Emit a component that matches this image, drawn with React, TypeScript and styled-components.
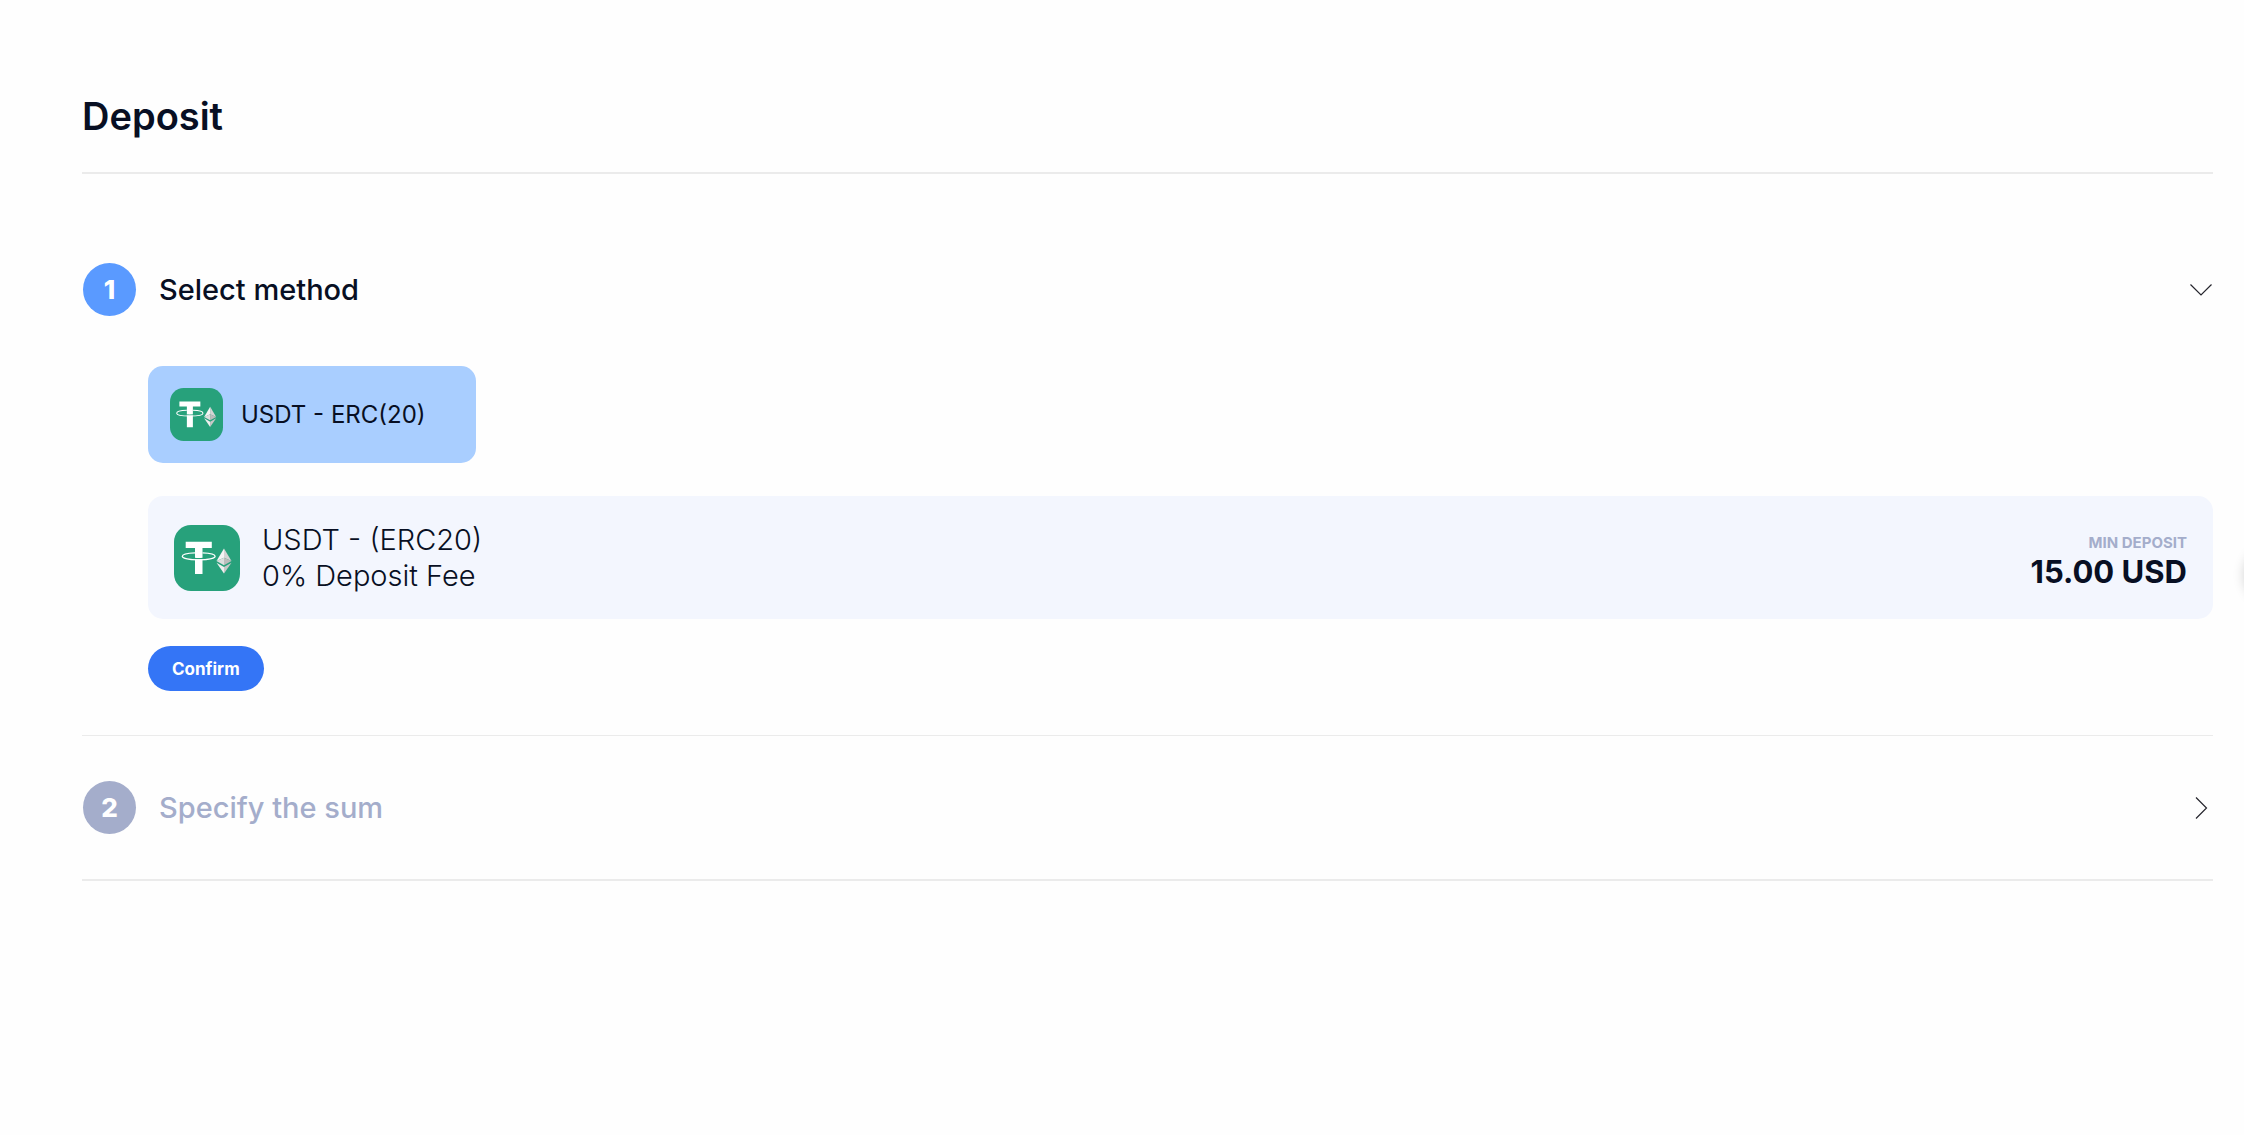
import React, { useState } from "react";
import styled, { createGlobalStyle } from "styled-components";

const color = {
  ink: "#080f23",
  muted: "#a4adcb",
  line: "#ebebeb",
  step: "#5a9aff",
  primary: "#3475f6",
  selected: "#a9ceff",
  panel: "#f3f6fe",
};

const GlobalStyle = createGlobalStyle`
  *, *::before, *::after { box-sizing: border-box; }
  body {
    margin: 0;
    background: #fefefe;
    color: ${color.ink};
    font-family: Inter, "Liberation Sans", sans-serif;
    overflow-x: hidden;
  }
  button { font: inherit; color: inherit; border: 0; cursor: pointer; }
`;

const Page = styled.main`
  padding: 92px 31px 48px 82px;
`;

const PageHeader = styled.header`
  padding-bottom: 32px;
  border-bottom: 2px solid ${color.line};
`;

const Title = styled.h1`
  margin: 0;
  font-size: 38px;
  font-weight: 600;
  line-height: 48px;
`;

const Steps = styled.div`
  padding-top: 44px;
`;

const Step = styled.section<{ $last?: boolean }>`
  border-bottom: ${(p) => (p.$last ? 2 : 1)}px solid ${color.line};
`;

const StepHeading = styled.h2`
  margin: 0;
`;

const StepToggle = styled.button<{ $muted?: boolean }>`
  display: flex;
  align-items: center;
  gap: 23px;
  width: 100%;
  padding: 45px 1px;
  background: none;
  color: ${(p) => (p.$muted ? color.muted : color.ink)};
  font-size: 29px;
  font-weight: 500;
  line-height: 36px;
  text-align: left;
`;

const StepNumber = styled.span<{ $active?: boolean }>`
  display: grid;
  place-items: center;
  flex: none;
  width: 53px;
  height: 53px;
  border-radius: 50%;
  background: ${(p) => (p.$active ? color.step : color.muted)};
  color: #fff;
  font-size: 26px;
  font-weight: 800;
`;

const StepLabel = styled.span`
  flex: 1;
`;

const StepBody = styled.div`
  display: flex;
  flex-direction: column;
  align-items: flex-start;
  padding: 5px 0 44px 66px;
`;

const Method = styled.button`
  display: flex;
  align-items: center;
  gap: 18px;
  min-width: 328px;
  padding: 22px;
  border-radius: 15px;
  background: ${color.selected};
  font-size: 24px;
  font-weight: 400;
  line-height: 30px;
`;

const Summary = styled.div`
  display: flex;
  align-items: center;
  align-self: stretch;
  gap: 22px;
  margin-top: 33px;
  padding: 26px 26px 25px;
  border-radius: 15px;
  background: ${color.panel};
`;

const SummaryText = styled.p`
  flex: 1;
  margin: 0;
  font-size: 29px;
  font-weight: 300;
  line-height: 36px;
`;

const Minimum = styled.div`
  padding-top: 8px;
  text-align: right;
`;

const MinimumLabel = styled.div`
  color: ${color.muted};
  font-size: 15px;
  font-weight: 700;
  line-height: 20px;
`;

const MinimumValue = styled.div`
  font-size: 31px;
  font-weight: 700;
  line-height: 38px;
`;

const Confirm = styled.button`
  margin-top: 27px;
  padding: 0 24px;
  height: 45px;
  border-radius: 23px;
  background: ${color.primary};
  color: #fff;
  font-size: 17px;
  font-weight: 700;
`;

const Chevron = styled.svg`
  flex: none;
  width: 22px;
  height: 22px;
  fill: none;
  stroke: #25252d;
  stroke-width: 1.2;
`;

const SideHandle = styled.div`
  position: fixed;
  top: 546px;
  left: 100%;
  width: 58px;
  height: 58px;
  border-radius: 50%;
  box-shadow: 0 0 12px rgba(0, 0, 0, 0.18);
`;

const TokenIcon = ({ size }: { size: number }) => (
  <svg width={size} height={size} viewBox="0 0 66 66" aria-hidden="true">
    <rect width="66" height="66" rx="17" fill="#27a17b" />
    <path d="M11.7 16.7H37.8V23H28.5V49H21V23H11.7Z" fill="#fff" />
    <path d="M20.5 33.4Q24.7 33.9 29 33.4" fill="none" stroke="#27a17b" strokeWidth="1.2" />
    <path
      d="M21 27.8C13.5 28.1 8.3 29.5 8.3 31.3C8.3 33.4 15.6 34.8 24.7 34.8S41.1 33.4 41.1 31.3C41.1 29.5 35.9 28.1 28.5 27.8"
      fill="none"
      stroke="#fff"
      strokeWidth="1.3"
    />
    <path d="M50 23.5 42.5 36 50 32.7Z" fill="#f4f4f4" />
    <path d="M50 23.5 57.5 36 50 32.7Z" fill="#d4d4d4" />
    <path d="M42.5 36 50 32.7V40.3Z" fill="#dedede" />
    <path d="M57.5 36 50 32.7V40.3Z" fill="#bcbcbc" />
    <path d="M42.5 37.8 50 42V48.5Z" fill="#efefef" />
    <path d="M57.5 37.8 50 42V48.5Z" fill="#c8c8c8" />
  </svg>
);

export default function App() {
  const [open, setOpen] = useState(true);

  return (
    <>
      <GlobalStyle />
      <Page>
        <PageHeader>
          <Title>Deposit</Title>
        </PageHeader>
        <Steps>
          <Step>
            <StepHeading>
              <StepToggle aria-expanded={open} onClick={() => setOpen(!open)}>
                <StepNumber $active>1</StepNumber>
                <StepLabel>Select method</StepLabel>
                <Chevron viewBox="0 0 22 22">
                  <path d={open ? "M0.5 5.5 11 16 21.5 5.5" : "M6 0.5 16.5 11 6 21.5"} />
                </Chevron>
              </StepToggle>
            </StepHeading>
            {open && (
              <StepBody>
                <Method aria-pressed="true">
                  <TokenIcon size={53} />
                  USDT - ERC(20)
                </Method>
                <Summary>
                  <TokenIcon size={66} />
                  <SummaryText>
                    USDT - (ERC20)
                    <br />
                    0% Deposit Fee
                  </SummaryText>
                  <Minimum>
                    <MinimumLabel>MIN DEPOSIT</MinimumLabel>
                    <MinimumValue>15.00 USD</MinimumValue>
                  </Minimum>
                </Summary>
                <Confirm>Confirm</Confirm>
              </StepBody>
            )}
          </Step>
          <Step $last>
            <StepHeading>
              <StepToggle $muted aria-expanded={false}>
                <StepNumber>2</StepNumber>
                <StepLabel>Specify the sum</StepLabel>
                <Chevron viewBox="0 0 22 22">
                  <path d="M6 0.5 16.5 11 6 21.5" />
                </Chevron>
              </StepToggle>
            </StepHeading>
          </Step>
        </Steps>
      </Page>
      <SideHandle />
    </>
  );
}
